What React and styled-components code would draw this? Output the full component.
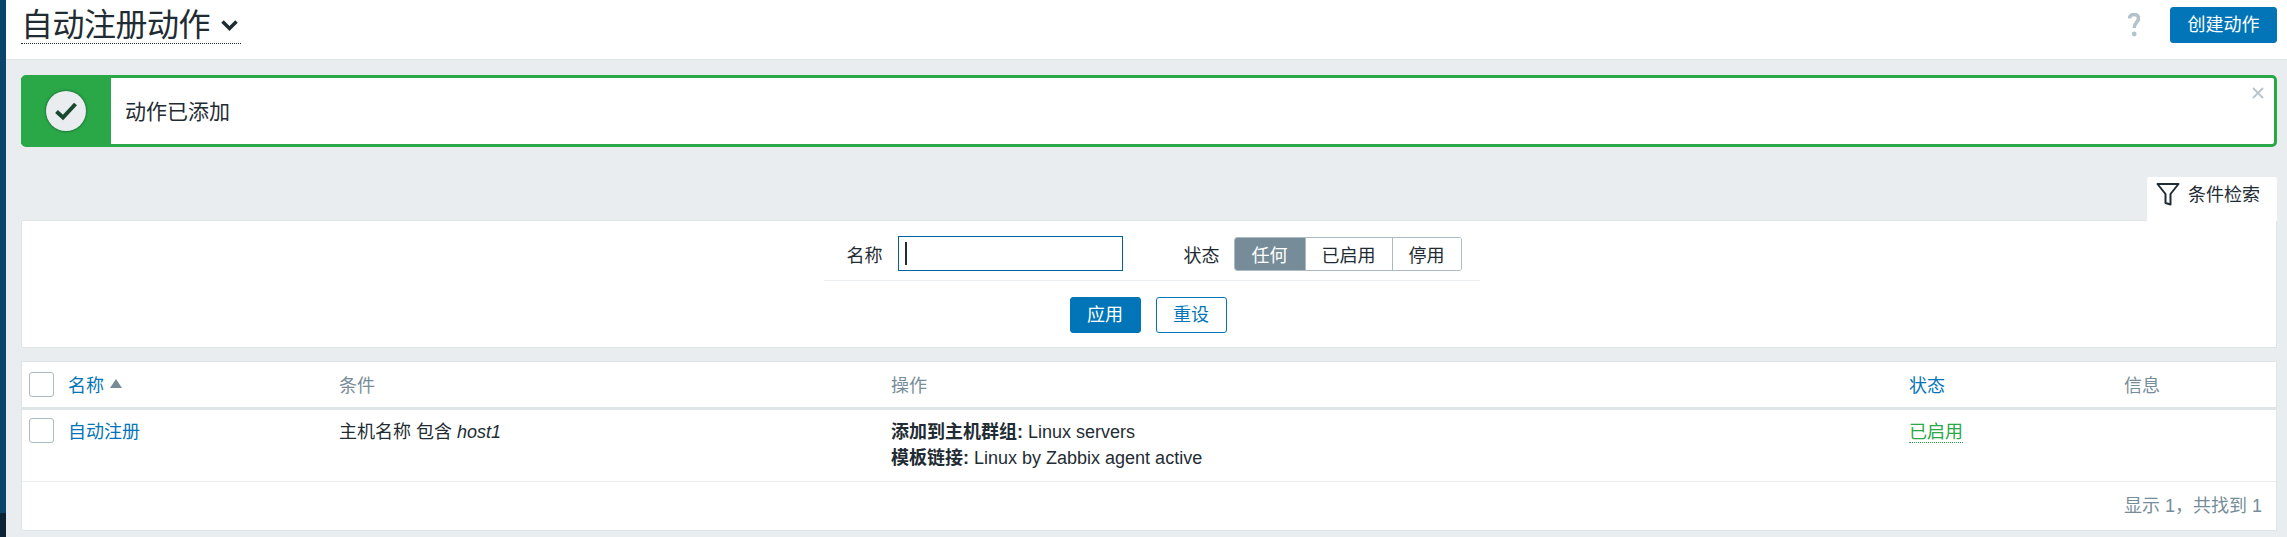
import React from 'react';
import styled, { createGlobalStyle } from 'styled-components';

const GlobalStyle = createGlobalStyle`
  html, body {
    margin: 0;
    padding: 0;
    height: 100%;
    background-color: #e9edf0;
  }
  body {
    font-family: "Liberation Sans", "Noto Sans CJK SC", sans-serif;
    font-size: 18px;
    color: #1f2c33;
    overflow: hidden;
  }
  * {
    box-sizing: border-box;
  }
`;

const Page = styled.div`
  display: flex;
  width: 2287px;
  height: 537px;
  overflow: hidden;
`;

const Sidebar = styled.aside`
  flex: 0 0 6px;
  display: flex;
  flex-direction: column;
  justify-content: flex-end;
  background-color: #0a466a;
`;

const SidebarFoot = styled.div`
  height: 24px;
  background-color: #0a2433;
`;

const Main = styled.main`
  flex: 1;
  min-width: 0;
`;

const Header = styled.header`
  display: flex;
  align-items: flex-start;
  justify-content: space-between;
  height: 60px;
  padding: 7px 10px 0 15px;
  background-color: #ffffff;
  border-bottom: 1px solid #dfe4e7;
`;

const Title = styled.h1`
  display: flex;
  align-items: center;
  gap: 11px;
  height: 37px;
  margin: 0;
  padding-right: 3px;
  font-size: 32px;
  font-weight: 400;
  line-height: 36px;
  letter-spacing: -0.5px;
  border-bottom: 1px dotted #1f2c33;
  color: #1f2c33;
`;

const HeaderActions = styled.div`
  display: flex;
  align-items: center;
  gap: 30px;
`;

const HelpIcon = styled.svg`
  width: 12px;
  height: 24px;
`;

const Button = styled.button`
  height: 36px;
  padding: 0;
  width: ${(p) => p.$width}px;
  font: inherit;
  font-size: 18px;
  line-height: 34px;
  border-radius: 3px;
  border: 1px solid #0275b8;
  background-color: ${(p) => (p.$outline ? '#ffffff' : '#0275b8')};
  color: ${(p) => (p.$outline ? '#0275b8' : '#ffffff')};
`;

const Content = styled.div`
  padding: 15px 10px 0 15px;
`;

const Message = styled.section`
  position: relative;
  display: flex;
  height: 72px;
  border: 3px solid #2aa847;
  border-radius: 5px;
  background-color: #ffffff;
`;

const MessageIcon = styled.div`
  flex: 0 0 90px;
  display: flex;
  align-items: center;
  justify-content: center;
  margin-left: -3px;
  background-color: #2aa847;
`;

const MessageCircle = styled.div`
  display: flex;
  align-items: center;
  justify-content: center;
  width: 40px;
  height: 40px;
  border-radius: 50%;
  background-color: #e9edef;
  box-shadow: 0 0 3px rgba(15, 60, 40, 0.8);
`;

const MessageText = styled.div`
  display: flex;
  align-items: center;
  padding: 0 0 2px 14px;
  font-size: 21px;
`;

const CloseIcon = styled.svg`
  position: absolute;
  top: 9px;
  right: 10px;
  width: 12px;
  height: 12px;
`;

const TabRow = styled.div`
  display: flex;
  justify-content: flex-end;
  margin-top: 30px;
`;

const FilterTab = styled.div`
  display: flex;
  align-items: flex-start;
  gap: 8px;
  width: 130px;
  height: 44px;
  margin-bottom: -1px;
  padding: 5px 0 0 9px;
  background-color: #ffffff;
  border-radius: 3px 3px 0 0;
  position: relative;
  z-index: 1;
  line-height: 26px;
`;

const FilterPanel = styled.section`
  display: flex;
  flex-direction: column;
  align-items: center;
  height: 128px;
  padding-top: 15px;
  background-color: #ffffff;
  border: 1px solid #dfe4e7;
`;

const FilterRow = styled.div`
  display: flex;
  align-items: center;
  width: 656px;
  height: 45px;
  margin-left: 5px;
  padding: 0 0 9px 23px;
  border-bottom: 1px solid #ebeef0;
`;

const FilterLabel = styled.label`
  width: 38px;
  margin-right: ${(p) => p.$gap}px;
`;

const NameInput = styled.div`
  display: flex;
  align-items: center;
  width: 225px;
  height: 35px;
  margin-right: 61px;
  padding-left: 6px;
  border: 1px solid #0261a0;
`;

const Caret = styled.span`
  width: 2px;
  height: 23px;
  background-color: #1f2c33;
`;

const Segmented = styled.div`
  display: flex;
  height: 34px;
  border-radius: 3px;
  overflow: hidden;
  border: 1px solid #acbbc2;
`;

const Segment = styled.span`
  display: flex;
  align-items: center;
  justify-content: center;
  width: ${(p) => p.$width}px;
  background-color: ${(p) => (p.$active ? '#768d99' : '#ffffff')};
  color: ${(p) => (p.$active ? '#ffffff' : '#1f2c33')};
  border-left: ${(p) => (p.$first ? 'none' : '1px solid #acbbc2')};
`;

const FilterButtons = styled.div`
  display: flex;
  gap: 15px;
  margin-top: 16px;
  margin-left: -2px;
`;

const Table = styled.section`
  margin-top: 13px;
  height: 170px;
  background-color: #ffffff;
  border: 1px solid #dfe4e7;
`;

const Row = styled.div`
  display: grid;
  grid-template-columns: 46px 271px 552px 1018px 215px 1fr;
  height: ${(p) => p.$height}px;
  align-items: ${(p) => (p.$head ? 'center' : 'start')};
  padding-top: ${(p) => (p.$head ? 0 : 8)}px;
  padding-bottom: ${(p) => (p.$head ? 1 : 0)}px;
  border-bottom: ${(p) => (p.$head ? '3px solid #dfe4e7' : '1px solid #ebeef0')};
`;

const Check = styled.span`
  display: block;
  width: 25px;
  height: 25px;
  margin-left: 7px;
  border: 1px solid #acbbc2;
  border-radius: 3px;
`;

const HeadCell = styled.div`
  display: flex;
  align-items: center;
  gap: 6px;
  padding-bottom: 1px;
  color: ${(p) => (p.$link ? '#0275b8' : '#768d99')};
`;

const Cell = styled.div`
  margin-top: 1px;
  line-height: 26px;
  color: ${(p) => (p.$link ? '#0275b8' : '#1f2c33')};
`;

const Strong = styled.b`
  font-weight: 700;
`;

const Status = styled.span`
  color: #2aa847;
  border-bottom: 1px dotted #2aa847;
`;

const Footer = styled.div`
  display: flex;
  align-items: center;
  justify-content: flex-end;
  height: 48px;
  padding: 0 14px 4px 0;
  color: #768d99;
`;

const Chevron = () => (
  <svg width="17" height="11" viewBox="0 0 17 11">
    <path d="M1.5 1.5 L8.5 8.5 L15.5 1.5" fill="none" stroke="#1f2c33" strokeWidth="3.5" />
  </svg>
);

const Tick = () => (
  <svg width="24" height="20" viewBox="0 0 24 20">
    <path d="M2.5 10.5 L9 16.5 L21.5 3" fill="none" stroke="#17492f" strokeWidth="4" />
  </svg>
);

const Funnel = () => (
  <svg width="24" height="24" viewBox="0 0 24 24">
    <path
      d="M1.5 2 H22.5 L14.5 12 V22.5 L9.5 21 V12 Z"
      fill="none"
      stroke="#1f2c33"
      strokeWidth="2"
      strokeLinejoin="round"
    />
  </svg>
);

const SortUp = () => (
  <svg width="12" height="9" viewBox="0 0 12 9">
    <path d="M6 0 L12 9 H0 Z" fill="#768d99" />
  </svg>
);

export default function App() {
  return (
    <>
      <GlobalStyle />
      <Page>
        <Sidebar>
          <SidebarFoot />
        </Sidebar>
        <Main>
          <Header>
            <Title>
              自动注册动作
              <Chevron />
            </Title>
            <HeaderActions>
              <HelpIcon viewBox="0 0 12 24">
                <path
                  d="M1.5 5.5 C1.5 3 3.5 1.5 6 1.5 C8.7 1.5 10.5 3 10.5 5.5 C10.5 9 6.2 9.5 6.2 15"
                  fill="none"
                  stroke="#b4c2ca"
                  strokeWidth="3.6"
                />
                <circle cx="6.2" cy="21" r="2.4" fill="#b4c2ca" />
              </HelpIcon>
              <Button $width={107}>创建动作</Button>
            </HeaderActions>
          </Header>
          <Content>
            <Message>
              <MessageIcon>
                <MessageCircle>
                  <Tick />
                </MessageCircle>
              </MessageIcon>
              <MessageText>动作已添加</MessageText>
              <CloseIcon viewBox="0 0 12 12">
                <path d="M1 1 L11 11 M11 1 L1 11" stroke="#b9c6ce" strokeWidth="2" />
              </CloseIcon>
            </Message>
            <TabRow>
              <FilterTab>
                <Funnel />
                条件检索
              </FilterTab>
            </TabRow>
            <FilterPanel>
              <FilterRow>
                <FilterLabel $gap={13}>名称</FilterLabel>
                <NameInput>
                  <Caret />
                </NameInput>
                <FilterLabel $gap={12}>状态</FilterLabel>
                <Segmented>
                  <Segment $first $active $width={70}>任何</Segment>
                  <Segment $width={87}>已启用</Segment>
                  <Segment $width={69}>停用</Segment>
                </Segmented>
              </FilterRow>
              <FilterButtons>
                <Button $width={71}>应用</Button>
                <Button $outline $width={71}>重设</Button>
              </FilterButtons>
            </FilterPanel>
            <Table>
              <Row $head $height={48}>
                <Check />
                <HeadCell $link>
                  名称
                  <SortUp />
                </HeadCell>
                <HeadCell>条件</HeadCell>
                <HeadCell>操作</HeadCell>
                <HeadCell $link>状态</HeadCell>
                <HeadCell>信息</HeadCell>
              </Row>
              <Row $height={72}>
                <Check />
                <Cell $link>自动注册</Cell>
                <Cell>
                  主机名称 包含 <i>host1</i>
                </Cell>
                <Cell>
                  <div>
                    <Strong>添加到主机群组:</Strong> Linux servers
                  </div>
                  <div>
                    <Strong>模板链接:</Strong> Linux by Zabbix agent active
                  </div>
                </Cell>
                <Cell>
                  <Status>已启用</Status>
                </Cell>
                <Cell />
              </Row>
              <Footer>显示 1，共找到 1</Footer>
            </Table>
          </Content>
        </Main>
      </Page>
    </>
  );
}
